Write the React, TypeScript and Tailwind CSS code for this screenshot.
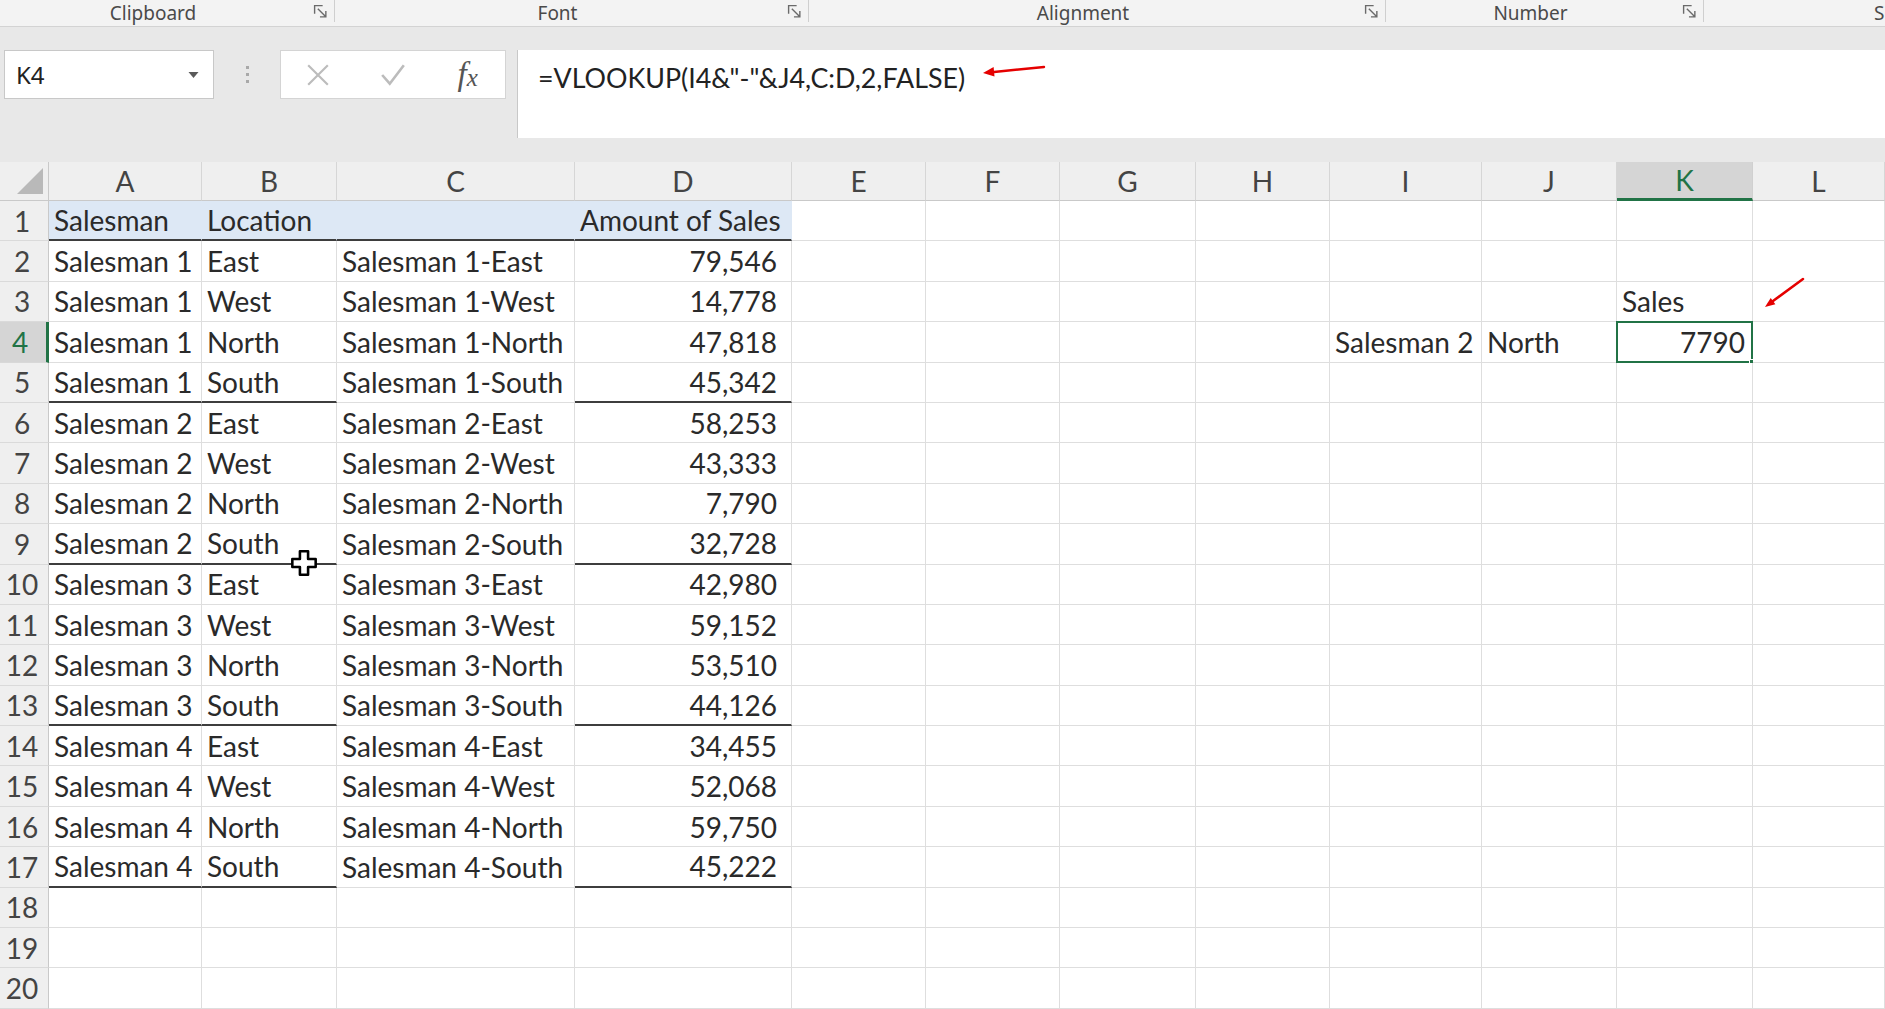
import React from 'react'

const COLS = ['A', 'B', 'C', 'D', 'E', 'F', 'G', 'H', 'I', 'J', 'K', 'L']
const GRID = 'grid grid-cols-[49px_153px_135px_238px_217px_134px_134px_136px_134px_152px_135px_136px_132px]'

const locs = ['East', 'West', 'North', 'South']
const sales = [79546, 14778, 47818, 45342, 58253, 43333, 7790, 32728, 42980, 59152, 53510, 44126, 34455, 52068, 59750, 45222]

interface Cell { text?: string; right?: boolean; pad?: boolean }

function buildRows(): Cell[][] {
  const rows: Cell[][] = []
  for (let r = 1; r <= 20; r++) {
    const row: Cell[] = COLS.map(() => ({}))
    if (r === 1) {
      row[0] = { text: 'Salesman' }
      row[1] = { text: 'Location' }
      row[3] = { text: 'Amount of Sales' }
    } else if (r <= 17) {
      const i = r - 2
      const who = `Salesman ${Math.floor(i / 4) + 1}`
      const loc = locs[i % 4]
      row[0] = { text: who }
      row[1] = { text: loc }
      row[2] = { text: `${who}-${loc}` }
      row[3] = { text: sales[i].toLocaleString('en-US'), right: true, pad: true }
    }
    if (r === 3) row[10] = { text: 'Sales' }
    if (r === 4) {
      row[8] = { text: 'Salesman 2' }
      row[9] = { text: 'North' }
      row[10] = { text: '7790', right: true }
    }
    rows.push(row)
  }
  return rows
}

function Launcher() {
  return (
    <svg width="15" height="15" viewBox="0 0 14 14" fill="none" stroke="#6a6a6a" strokeWidth="1.3">
      <path d="M1.5 9V1.5H9" />
      <path d="M4.5 4.5l7 7M12 6.5v5.5H6.5" />
    </svg>
  )
}

function Ribbon() {
  const groups = [
    { label: 'Clipboard', w: 'w-[335px]' },
    { label: 'Font', w: 'w-[474px]' },
    { label: 'Alignment', w: 'w-[577px]' },
    { label: 'Number', w: 'w-[318px]' },
  ]
  return (
    <div className="h-[27px] bg-[#f3f3f3] border-b border-[#d3d3d3] flex items-start font-['Noto_Sans',sans-serif] text-[19px] leading-[22px] text-[#4a4a4a]">
      {groups.map(g => (
        <div key={g.label} className={`${g.w} flex items-start shrink-0`}>
          <div className="flex-1 text-center pt-[2px]">{g.label}</div>
          <div className="w-[28px] flex justify-center pt-[4px]"><Launcher /></div>
          <div className="w-px h-[22px] bg-[#cfcfcf]" />
        </div>
      ))}
      <div className="pl-[170px] pt-[2px] whitespace-nowrap">S</div>
    </div>
  )
}

function FormulaBar() {
  return (
    <div className="flex items-start mt-[23px]">
      <div className="ml-[4px] w-[210px] h-[49px] bg-white border border-[#c8c8c8] flex items-center justify-between pl-[11px] pr-[14px] font-['Noto_Sans',sans-serif] text-[24px] text-[#222]">
        <span>K4</span>
        <svg width="11" height="6" viewBox="0 0 10 6"><path d="M0 0h10L5 6z" fill="#5a5a5a" /></svg>
      </div>
      <div className="w-[66px] h-[49px] flex flex-col items-center justify-center gap-[4px]">
        <span className="w-[3px] h-[3px] bg-[#a9a9a9]" />
        <span className="w-[3px] h-[3px] bg-[#a9a9a9]" />
        <span className="w-[3px] h-[3px] bg-[#a9a9a9]" />
      </div>
      <div className="w-[226px] h-[49px] bg-white border border-[#d4d4d4] grid grid-cols-3 items-center">
        <div className="flex justify-center">
          <svg width="24" height="24" viewBox="0 0 22 22" stroke="#bcbcbc" strokeWidth="2"><path d="M2 2l18 18M20 2L2 20" /></svg>
        </div>
        <div className="flex justify-center">
          <svg width="26" height="24" viewBox="0 0 24 22" fill="none" stroke="#bcbcbc" strokeWidth="2.4"><path d="M2 11l7 8L22 2" /></svg>
        </div>
        <div className="flex justify-center items-start font-['Liberation_Serif',serif] italic text-[33px] text-[#555] leading-none">
          <span>f</span><span className="text-[25px] mt-[7px]">x</span>
        </div>
      </div>
      <div className="ml-[11px] flex-1 h-[88px] bg-white border-l border-[#c8c8c8] pl-[20px] pt-[8px] font-['Lato',sans-serif] text-[26.8px] text-[#222] whitespace-nowrap">
        =VLOOKUP(I4&amp;"-"&amp;J4,C:D,2,FALSE)
      </div>
    </div>
  )
}

function Sheet() {
  const rows = buildRows()
  return (
    <div className="font-['Lato',sans-serif] text-[28px] leading-none">
      <div className={`${GRID} h-[39px]`}>
        <div className="relative bg-[#efefef] border-r border-b border-[#c9c9c9]">
          <svg className="absolute right-[5px] bottom-[6px]" width="26" height="26" viewBox="0 0 26 26"><path d="M26 0v26H0z" fill="#b9b9b9" /></svg>
        </div>
        {COLS.map(c => (
          <div
            key={c}
            className={c === 'K'
              ? 'flex items-center justify-center bg-[#d5d5d5] text-[#217346] border-r border-[#d0d0d0] border-b-[3px] border-b-[#217346]'
              : 'flex items-center justify-center bg-[#efefef] text-[#444] border-r border-[#d6d6d6] border-b border-b-[#c9c9c9]'}
          >
            {c}
          </div>
        ))}
      </div>
      {rows.map((row, ri) => {
        const r = ri + 1
        return (
          <div key={r} className={`${GRID} h-[40.4px]`}>
            <div
              className={r === 4
                ? 'flex items-center justify-center pr-[6px] bg-[#d5d5d5] text-[#217346] border-r-[3px] border-r-[#217346] border-b border-b-[#d8d8d8]'
                : 'flex items-center justify-center pr-[4px] bg-[#efefef] text-[#444] border-r border-r-[#c9c9c9] border-b border-b-[#dadada]'}
            >
              {r}
            </div>
            {row.map((cell, ci) => {
              const blue = r === 1 && ci <= 3
              const dark = (r === 1 && ci <= 3) || ([5, 9, 13, 17].includes(r) && (ci <= 1 || ci === 3))
              const sel = r === 4 && ci === 10
              return (
                <div
                  key={ci}
                  className={[
                    'relative flex items-center whitespace-nowrap text-[#2a2a2a] border-r border-b border-[#dedede]',
                    blue ? 'bg-[#dde8f5] border-r-[#dde8f5]' : 'bg-white',
                    dark ? 'border-b-2 border-b-[#3d3d3d]' : '',
                    cell.right ? 'justify-end' : '',
                    cell.pad ? 'pr-[14px] pl-[6px]' : cell.right ? 'pr-[7px] pl-[6px]' : 'pl-[5px]',
                  ].join(' ')}
                >
                  {cell.text}
                  {sel && (
                    <>
                      <div className="absolute -left-[1px] -top-[1px] -right-[1px] -bottom-[1px] border-2 border-[#217346] pointer-events-none" />
                      <div className="absolute -right-[5px] -bottom-[5px] w-[8px] h-[8px] bg-[#217346] border border-white" />
                    </>
                  )}
                </div>
              )
            })}
          </div>
        )
      })}
    </div>
  )
}

export default function App() {
  return (
    <div className="relative w-[1885px] h-[1009px] overflow-hidden bg-[#e8e8e8]">
      <Ribbon />
      <FormulaBar />
      <div className="mt-[24px]">
        <Sheet />
      </div>

      {/* mouse cursor */}
      <svg className="absolute left-[290px] top-[549px]" width="28" height="28" viewBox="0 0 24 24">
        <path d="M8.5 2h7v6.5H22v7h-6.5V22h-7v-6.5H2v-7h6.5z" fill="#fff" stroke="#000" strokeWidth="2.2" strokeLinejoin="round" />
      </svg>

      {/* red arrows */}
      <svg className="absolute left-[975px] top-[60px]" width="75" height="22" viewBox="0 0 75 22">
        <path d="M69 7L19 12" stroke="#e50000" strokeWidth="2.5" strokeLinecap="round" />
        <path d="M8 13l11.5 3.6L18.6 7z" fill="#e50000" />
      </svg>
      <svg className="absolute left-[1758px] top-[272px]" width="52" height="42" viewBox="0 0 52 42">
        <path d="M45 7L15 29" stroke="#e50000" strokeWidth="2.5" strokeLinecap="round" />
        <path d="M7 35l10.4-2.7-4.7-6.4z" fill="#e50000" />
      </svg>
    </div>
  )
}
